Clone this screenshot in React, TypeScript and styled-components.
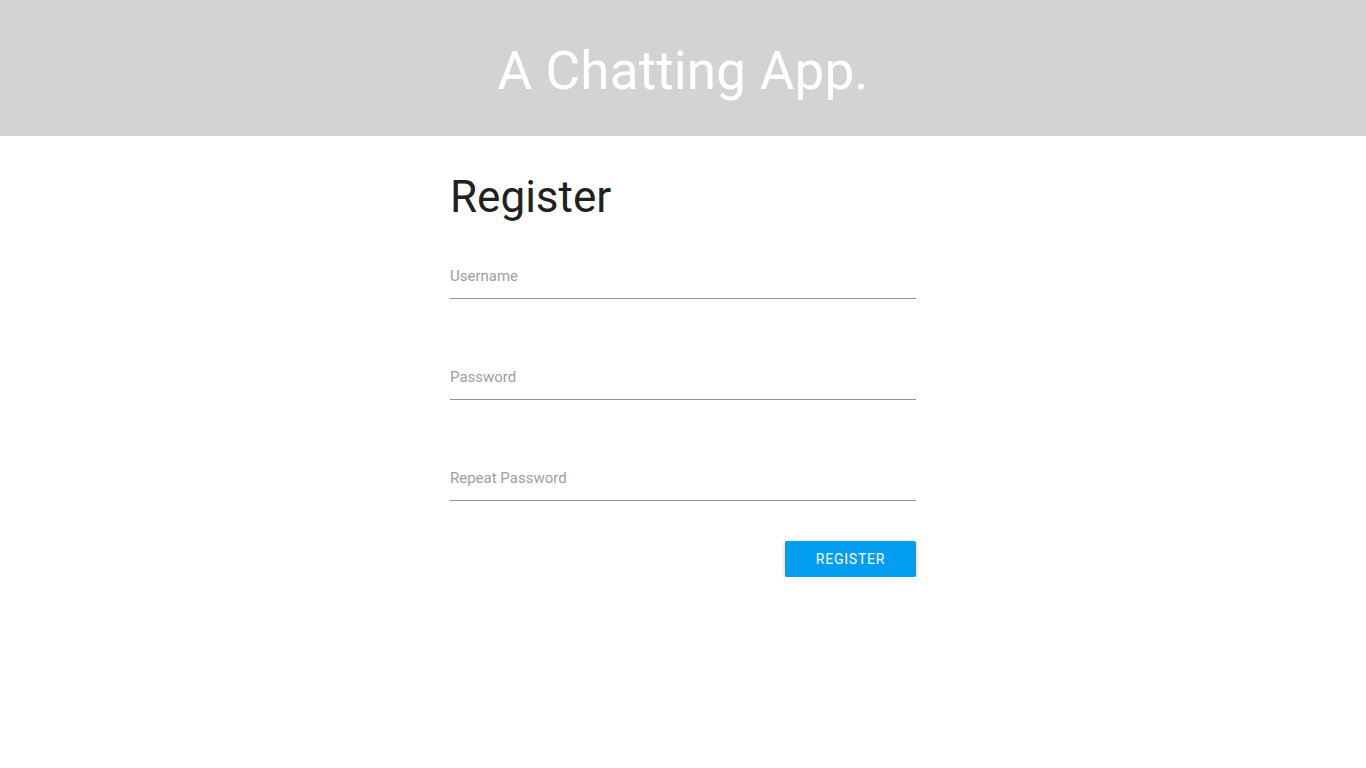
import React, { useState } from 'react';
import styled, { createGlobalStyle } from 'styled-components';

const GlobalStyle = createGlobalStyle`
    body {
        margin: 0;
        background: #fff;
        font-family: Roboto, 'Liberation Sans', sans-serif;
    }
`;

const Header = styled.header`
    height: 136px;
    background-color: #d3d3d3;
    display: flex;
    align-items: center;
    justify-content: center;
`;

const HeaderTitle = styled.h1`
    margin: 0;
    color: #fff;
    font-size: 53px;
    font-weight: 400;
    letter-spacing: 0.2px;
    padding-top: 5px;
`;

const Main = styled.main`
    width: 466px;
    margin: 0 auto;
    padding-top: 33px;
`;

const FormTitle = styled.h2`
    margin: 0 0 36px;
    color: #212121;
    font-size: 44px;
    font-weight: 400;
    line-height: 56px;
`;

const Form = styled.form`
    display: flex;
    flex-direction: column;
`;

const Field = styled.div`
    & + & {
        margin-top: 63px;
    }
`;

const Input = styled.input`
    display: block;
    width: 100%;
    box-sizing: border-box;
    border: none;
    border-bottom: 1px solid #949494;
    padding: 6px 0 13px;
    font-family: Roboto, 'Liberation Sans', sans-serif;
    font-size: 15px;
    color: #212121;
    background: transparent;
    &:focus {
        outline: none;
    }
    &::placeholder {
        color: #9e9e9e;
    }
`;

const Actions = styled.div`
    display: flex;
    justify-content: flex-end;
    margin-top: 40px;
`;

const Button = styled.button`
    width: 131px;
    height: 36px;
    border: none;
    border-radius: 2px;
    background-color: #049ef0;
    color: #fff;
    font-family: Roboto, 'Liberation Sans', sans-serif;
    font-size: 14px;
    font-weight: 400;
    letter-spacing: 0.8px;
    text-transform: uppercase;
    cursor: pointer;
    box-shadow: 0 1px 5px rgba(0, 0, 0, 0.2), 0 2px 2px rgba(0, 0, 0, 0.12);
`;

export default function App() {
    const [username, setUsername] = useState('');
    const [password, setPassword] = useState('');
    const [repeat, setRepeat] = useState('');

    return (
        <>
            <GlobalStyle />
            <Header>
                <HeaderTitle>A Chatting App.</HeaderTitle>
            </Header>
            <Main>
                <FormTitle>Register</FormTitle>
                <Form onSubmit={(e) => e.preventDefault()}>
                    <Field>
                        <Input
                            type='text'
                            placeholder='Username'
                            value={username}
                            onChange={(e) => setUsername(e.target.value)}
                        />
                    </Field>
                    <Field>
                        <Input
                            type='password'
                            placeholder='Password'
                            value={password}
                            onChange={(e) => setPassword(e.target.value)}
                        />
                    </Field>
                    <Field>
                        <Input
                            type='password'
                            placeholder='Repeat Password'
                            value={repeat}
                            onChange={(e) => setRepeat(e.target.value)}
                        />
                    </Field>
                    <Actions>
                        <Button type='submit'>Register</Button>
                    </Actions>
                </Form>
            </Main>
        </>
    );
}
